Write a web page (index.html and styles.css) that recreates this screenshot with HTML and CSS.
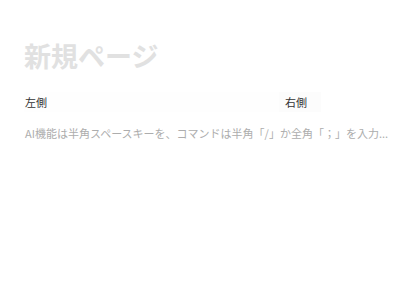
FILE: index.html
```html
<!DOCTYPE html>
<html lang="ja">
<head>
<meta charset="utf-8">
<link rel="stylesheet" href="styles.css">
</head>
<body>
<div class="page">
  <h1 class="title">新規ページ</h1>
  <div class="columns">
    <div class="col col-left"><span class="label">左側</span></div>
    <div class="col col-right"><span class="label">右側</span></div>
  </div>
  <div class="placeholder">AI機能は半角スペースキーを、コマンドは半角「/」か全角「；」を入力...</div>
</div>
</body>
</html>
```
FILE: styles.css
```css
html, body {
  margin: 0;
  padding: 0;
  background: #ffffff;
}
body {
  font-family: "Noto Sans CJK JP", "Noto Sans", sans-serif;
}
.page {
  padding: 38px 0 0 24px;
  width: 376px;
}
.title {
  margin: 0;
  font-size: 27px;
  line-height: 36px;
  font-weight: 700;
  color: #e1e1e1;
}
.columns {
  display: flex;
  margin-top: 18px;
}
.col {
  height: 20px;
  display: flex;
  align-items: center;
  padding-left: 1px;
}
.col-left {
  width: 254px;
  background: #fefefe;
}
.col-right {
  width: 36px;
  padding-left: 6px;
  background: #fcfcfc;
}
.label {
  font-size: 11px;
  color: #333333;
}
.placeholder {
  margin-top: 12px;
  padding-left: 1px;
  font-size: 11px;
  line-height: 18px;
  color: #adadad;
  white-space: nowrap;
}
```
